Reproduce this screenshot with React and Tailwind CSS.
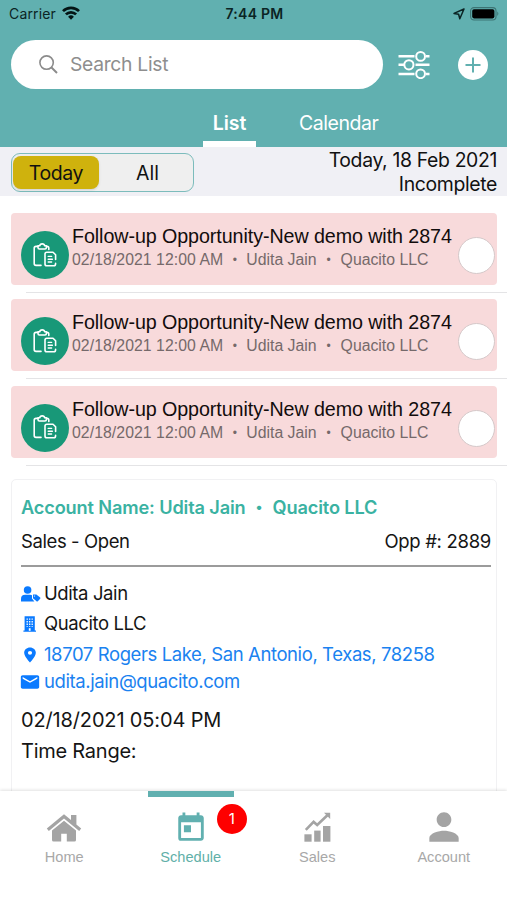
import React from 'react'
import { MdEmail, MdLocationOn, MdPerson, MdToday } from 'react-icons/md'

const followUps = [
  { id: 1, title: 'Follow-up Opportunity-New demo with 2874', date: '02/18/2021 12:00 AM', name: 'Udita Jain', company: 'Quacito LLC' },
  { id: 2, title: 'Follow-up Opportunity-New demo with 2874', date: '02/18/2021 12:00 AM', name: 'Udita Jain', company: 'Quacito LLC' },
  { id: 3, title: 'Follow-up Opportunity-New demo with 2874', date: '02/18/2021 12:00 AM', name: 'Udita Jain', company: 'Quacito LLC' },
]

const StatusBar = () => (
  <div className="grid grid-cols-3 items-center h-[27px] pl-[9px] pr-[7px] text-[#0b2424]">
    <div className="flex items-center gap-[6px]">
      <span className="text-[14px] tracking-[0.15px]">Carrier</span>
      <svg className="w-[18px] h-[14px] -mt-[2px]" viewBox="0 0 18 14" fill="none" stroke="#041414" strokeWidth="2.7">
        <path d="M1 5.1 A11.4 11.4 0 0 1 17 5.1" />
        <path d="M3.9 8.4 A7.2 7.2 0 0 1 14.1 8.4" />
        <path d="M9 13.8 L6.1 10.8 A4.1 4.1 0 0 1 11.9 10.8 Z" fill="#041414" stroke="none" />
      </svg>
    </div>
    <span className="text-center text-[14px] tracking-[0.25px] font-semibold">7:44 PM</span>
    <div className="flex items-center justify-end gap-[5px]">
      <svg className="w-[12px] h-[12px]" viewBox="0 0 12 12" fill="none" stroke="#0b2424" strokeWidth="1.5" strokeLinejoin="round">
        <path d="M11 1 L1 5.4 L5.6 6.2 L6.8 10.8 Z" />
      </svg>
      <svg className="w-[30px] h-[14px]" viewBox="0 0 30 14">
        <rect x="0.6" y="0.6" width="25.4" height="12.4" rx="3.4" fill="none" stroke="#3d7474" strokeWidth="1.1" />
        <rect x="2.2" y="2.2" width="22.2" height="9.2" rx="1.8" fill="#000" />
        <path d="M27.3 4.6 Q29.4 6.8 27.3 9 Z" fill="#3d7474" />
      </svg>
    </div>
  </div>
)

const FilterIcon = () => (
  <svg className="w-[32px] h-[28px]" viewBox="0 0 32 28" fill="none" stroke="#fff" strokeWidth="2.6">
    <path d="M0.5 5.2 H16.5 M28 5.2 H31.5 M0.5 13.8 H6 M17.5 13.8 H31.5 M0.5 23 H16.5 M28 23 H31.5" />
    <circle cx="22.6" cy="5.4" r="4.4" strokeWidth="2" />
    <circle cx="10.9" cy="13.8" r="4.6" strokeWidth="2" />
    <circle cx="22.6" cy="22.8" r="4.4" strokeWidth="2" />
  </svg>
)

const Header = () => (
  <header className="bg-[#61b0b0] h-[147px] flex flex-col">
    <StatusBar />
    <div className="flex items-center h-[49px] mt-[13px] pl-[11px] pr-[19px]">
      <div className="flex items-center w-[372px] h-[49px] rounded-full bg-white pl-[28px] gap-[12px]">
        <svg className="w-[19px] h-[19px]" viewBox="0 0 19 19" fill="none" stroke="#8b8b8b" strokeWidth="1.6">
          <circle cx="7.6" cy="7.6" r="6.7" />
          <path d="M12.5 12.5 L18 18" strokeWidth="2" />
        </svg>
        <span className="text-[19.3px] tracking-[-0.3px] text-[#8e8e8e]">Search List</span>
      </div>
      <div className="ml-[15px]"><FilterIcon /></div>
      <div className="ml-auto w-[30px] h-[30px] rounded-full bg-white flex items-center justify-center">
        <svg className="w-[16px] h-[16px]" viewBox="0 0 16 16" stroke="#61b0b0" strokeWidth="2">
          <path d="M8 0.5 V15.5 M0.5 8 H15.5" />
        </svg>
      </div>
    </div>
    <div className="flex flex-1 pl-[203px] text-white text-[19.5px]">
      <div className="w-[53px] pt-[12px] h-[58px] border-b-6 border-white text-center font-semibold">
        <span className="block h-[44px] leading-[44px]">List</span>
      </div>
      <span className="ml-[43px] mt-[12px] leading-[44px] tracking-[-0.45px]">Calendar</span>
    </div>
  </header>
)

const FilterBar = () => (
  <div className="flex justify-between bg-[#f0f0f5] h-[49px] pl-[11px] pr-[10px] pt-[1px] text-[#111]">
    <div className="flex w-[183px] h-[39px] mt-[5px] p-[2px] pl-[1px] rounded-[9px] border border-[#7cbcbc] bg-[#efefef] text-[19.5px] leading-[34px] text-center">
      <div className="w-[86px] rounded-[8px] bg-[#cfb20d] shadow-sm tracking-[-0.4px]">Today</div>
      <div className="flex-1 pl-[5px]">All</div>
    </div>
    <div className="text-right text-[19.4px] leading-[24px] tracking-[-0.35px]">
      <p>Today, 18 Feb 2021</p>
      <p>Incomplete</p>
    </div>
  </div>
)

const ClipboardIcon = () => (
  <svg className="w-[24px] h-[24px] -mt-[1px]" viewBox="0 0 24 24" fill="none" stroke="#fff" strokeWidth="1.6" strokeLinecap="round" strokeLinejoin="round">
    <path d="M8 22.4 H3 Q1.2 22.4 1.2 20.6 V5.2 Q1.2 3.4 3 3.4 H4.8 M13.6 3.4 H14 Q15.8 3.4 15.8 5.2 V6.4" />
    <path d="M5 2.8 H6.7 Q7 0.9 9.2 0.9 Q11.4 0.9 11.7 2.8 H13.4 V4.6 Q13.4 6 12 6 H6.4 Q5 6 5 4.6 Z" />
    <path d="M22.6 16.5 V11.8 L20 9.2 H13.8 Q12 9.2 12 11 V21 Q12 22.8 13.8 22.8 H20.8 Q22.6 22.8 22.6 20.4" />
    <path d="M15.2 13.4 H18.6 M15.2 16.2 H19.4 M15.2 19 H18.6" strokeWidth="1.4" />
  </svg>
)

const FollowUpCard = ({ title, date, name, company }) => (
  <div className="h-[86.3px]">
    <div className="mx-[11px] mr-[10px] h-[72px] rounded-[4px] bg-[#f8dadb] flex pl-[10px] pr-[2px] font-['Liberation_Sans',sans-serif]">
      <div className="w-[48px] h-[48px] mt-[18px] shrink-0 rounded-full bg-[#189878] flex items-center justify-center">
        <ClipboardIcon />
      </div>
      <div className="ml-[3px] w-[384px] whitespace-nowrap">
        <h2 className="mt-[11px] h-[24px] leading-[24px] text-[19.7px] tracking-[-0.08px] text-[#120c0c]">{title}</h2>
        <p className="mt-px flex h-[22px] leading-[22px] text-[15.8px] text-[#75696a]">
          <span className="tracking-[0.06px]">{date}</span>
          <span className="w-[23px] text-center text-[12px]">•</span>
          <span>{name}</span>
          <span className="w-[24px] text-center text-[12px]">•</span>
          <span>{company}</span>
        </p>
      </div>
      <div className="w-[37px] h-[37px] mt-[24px] ml-auto shrink-0 rounded-full bg-white border border-[#d5c8c9]" />
    </div>
    <div className="mt-[7px] ml-[26px] h-px bg-[#e4e4e6]" />
  </div>
)

const UserTagIcon = () => (
  <svg className="w-[20px] h-[16px] mr-[3px]" viewBox="0 0 20 16" fill="#0a7aff">
    <circle cx="6.6" cy="4" r="3.8" />
    <path d="M0 15.6 V13 Q0 8.8 4.2 8.8 H9 Q10.2 8.8 11 9.3 V12.4 L13.4 15.6 Z" />
    <path d="M12 8.4 H15.4 L19.2 11.6 Q19.6 12.2 19.2 12.8 L16.8 15.3 Q16.1 15.8 15.5 15.3 L12 12.2 Z" />
    <circle cx="13.5" cy="10" r="0.6" fill="#fff" />
  </svg>
)

const BuildingIcon = () => (
  <svg className="w-[18px] h-[16px] mr-[5px]" viewBox="0 0 18 16">
    <path d="M3.6 0.3 H13.8 V14.6 H15 V15.7 H2.4 V14.6 H3.6 Z" fill="#0a7aff" />
    <path d="M6.2 2.4 V11 M8.7 2.4 V11 M11.2 2.4 V11" stroke="#fff" strokeWidth="1.3" strokeDasharray="1.4 1.2" />
    <path d="M7.8 12.2 H9.6 V14.8 H7.8 Z" fill="#fff" />
  </svg>
)

const AccountCard = () => (
  <div className="mx-[11px] mr-[10px] h-[330px] border border-[#f1f1f3] rounded-[5px] pl-[9px] pr-[5px] text-[#151515] text-[18.5px] tracking-[-0.4px]">
    <h2 className="mt-[15px] h-[24px] leading-[24px] flex font-semibold text-[18.2px] tracking-[-0.15px] text-[#3ab2a2] whitespace-nowrap">
      <span>Account Name: Udita Jain</span>
      <span className="w-[27px] text-center text-[14px]">•</span>
      <span>Quacito LLC</span>
    </h2>
    <div className="flex justify-between mt-[10px] h-[24px] leading-[24px]">
      <span>Sales - Open</span>
      <span className="tracking-[-0.3px]">Opp #: 2889</span>
    </div>
    <div className="mt-[12px] h-[2px] bg-[#9b9b9b]" />
    <div className="flex items-center mt-[15px] h-[24px]">
      <UserTagIcon />
      <span>Udita Jain</span>
    </div>
    <div className="flex items-center mt-[6px] h-[24px]">
      <BuildingIcon />
      <span>Quacito LLC</span>
    </div>
    <div className="flex items-center mt-[7px] h-[24px] text-[#1a82f0] whitespace-nowrap">
      <MdLocationOn className="w-[20px] h-[18px] -ml-[1px] mr-[4px] text-[#0a7aff]" preserveAspectRatio="none" />
      <span>18707 Rogers Lake, San Antonio, Texas, 78258</span>
    </div>
    <div className="flex items-center mt-[3px] h-[24px] text-[#1a82f0]">
      <MdEmail className="w-[22px] h-[20px] -ml-[2px] mr-[3px] text-[#0a7aff]" preserveAspectRatio="none" />
      <span>udita.jain@quacito.com</span>
    </div>
    <p className="mt-[14px] h-[24px] leading-[24px] text-[20px] tracking-[-0.15px]">02/18/2021 05:04 PM</p>
    <p className="mt-[7px] h-[24px] leading-[24px] text-[20px] tracking-[-0.25px]">Time Range:</p>
  </div>
)

const HomeIcon = () => (
  <svg className="w-[36px] h-[28px]" viewBox="0 0 36 28" fill="#a4a4a4">
    <path d="M18 0.2 L25 6 V1 H30.4 V10.6 L35.2 14.6 L33.2 17.1 L18 4.5 L2.8 17.1 L0.8 14.6 Z" />
    <path d="M18 6.7 L30 16.6 V26 Q30 27.6 28.4 27.6 H20.8 V19.8 H15.2 V27.6 H7.6 Q6 27.6 6 26 V16.6 Z" />
  </svg>
)

const SalesIcon = () => (
  <svg className="w-[27px] h-[30px]" viewBox="0 0 27 30" fill="#a4a4a4">
    <rect x="0.4" y="22.3" width="7.2" height="7.4" />
    <rect x="10.2" y="18.6" width="6.4" height="11.1" />
    <rect x="19" y="14" width="7.4" height="15.7" />
    <path d="M1.8 17.8 L9.6 9.9 L13.2 13 L23.4 3.2" fill="none" stroke="#a4a4a4" strokeWidth="2.6" />
    <path d="M20 0.8 H26.2 V7 Z" />
  </svg>
)

const TabItem = ({ label, active, badge, children }) => (
  <div className="w-[126.6px] flex flex-col items-center">
    <div className={active ? 'w-[86px] h-[6px] bg-[#61b0b0]' : 'w-[86px] h-[6px]'} />
    <div className="relative h-[30px] mt-[15px] flex items-end justify-center">
      {children}
      {badge && (
        <span className="absolute left-[43px] top-[-8px] w-[30px] h-[30px] rounded-full bg-[#fe0000] text-white text-[15px] leading-[30px] text-center font-[Inter,sans-serif]">
          {badge}
        </span>
      )}
    </div>
    <span className={active ? 'mt-[3px] leading-[24px] text-[14.6px] text-[#61b0a8]' : 'mt-[3px] leading-[24px] text-[14.6px] text-[#a8a8a8]'}>{label}</span>
  </div>
)

const TabBar = () => (
  <nav className="h-[109px] mt-auto shrink-0 bg-white flex pl-px relative shadow-[0_-1px_3px_rgba(0,0,0,0.12)] font-['Liberation_Sans',sans-serif]">
    <TabItem label="Home"><HomeIcon /></TabItem>
    <TabItem label="Schedule" active badge={1}>
      <MdToday className="w-[34px] h-[34px] -mb-[3px] text-[#61b0b0]" />
    </TabItem>
    <TabItem label="Sales"><SalesIcon /></TabItem>
    <TabItem label="Account"><MdPerson className="w-[44px] h-[44px] -mb-[7px] text-[#a4a4a4]" /></TabItem>
  </nav>
)

export default function App() {
  return (
    <div className="w-[507px] h-[900px] overflow-hidden flex flex-col bg-white font-[Inter,sans-serif]">
      <Header />
      <FilterBar />
      <main className="h-[595px] overflow-hidden pt-[17px]">
        {followUps.map((item) => (
          <FollowUpCard key={item.id} {...item} />
        ))}
        <div className="h-[7px]" />
        <AccountCard />
      </main>
      <TabBar />
    </div>
  )
}
